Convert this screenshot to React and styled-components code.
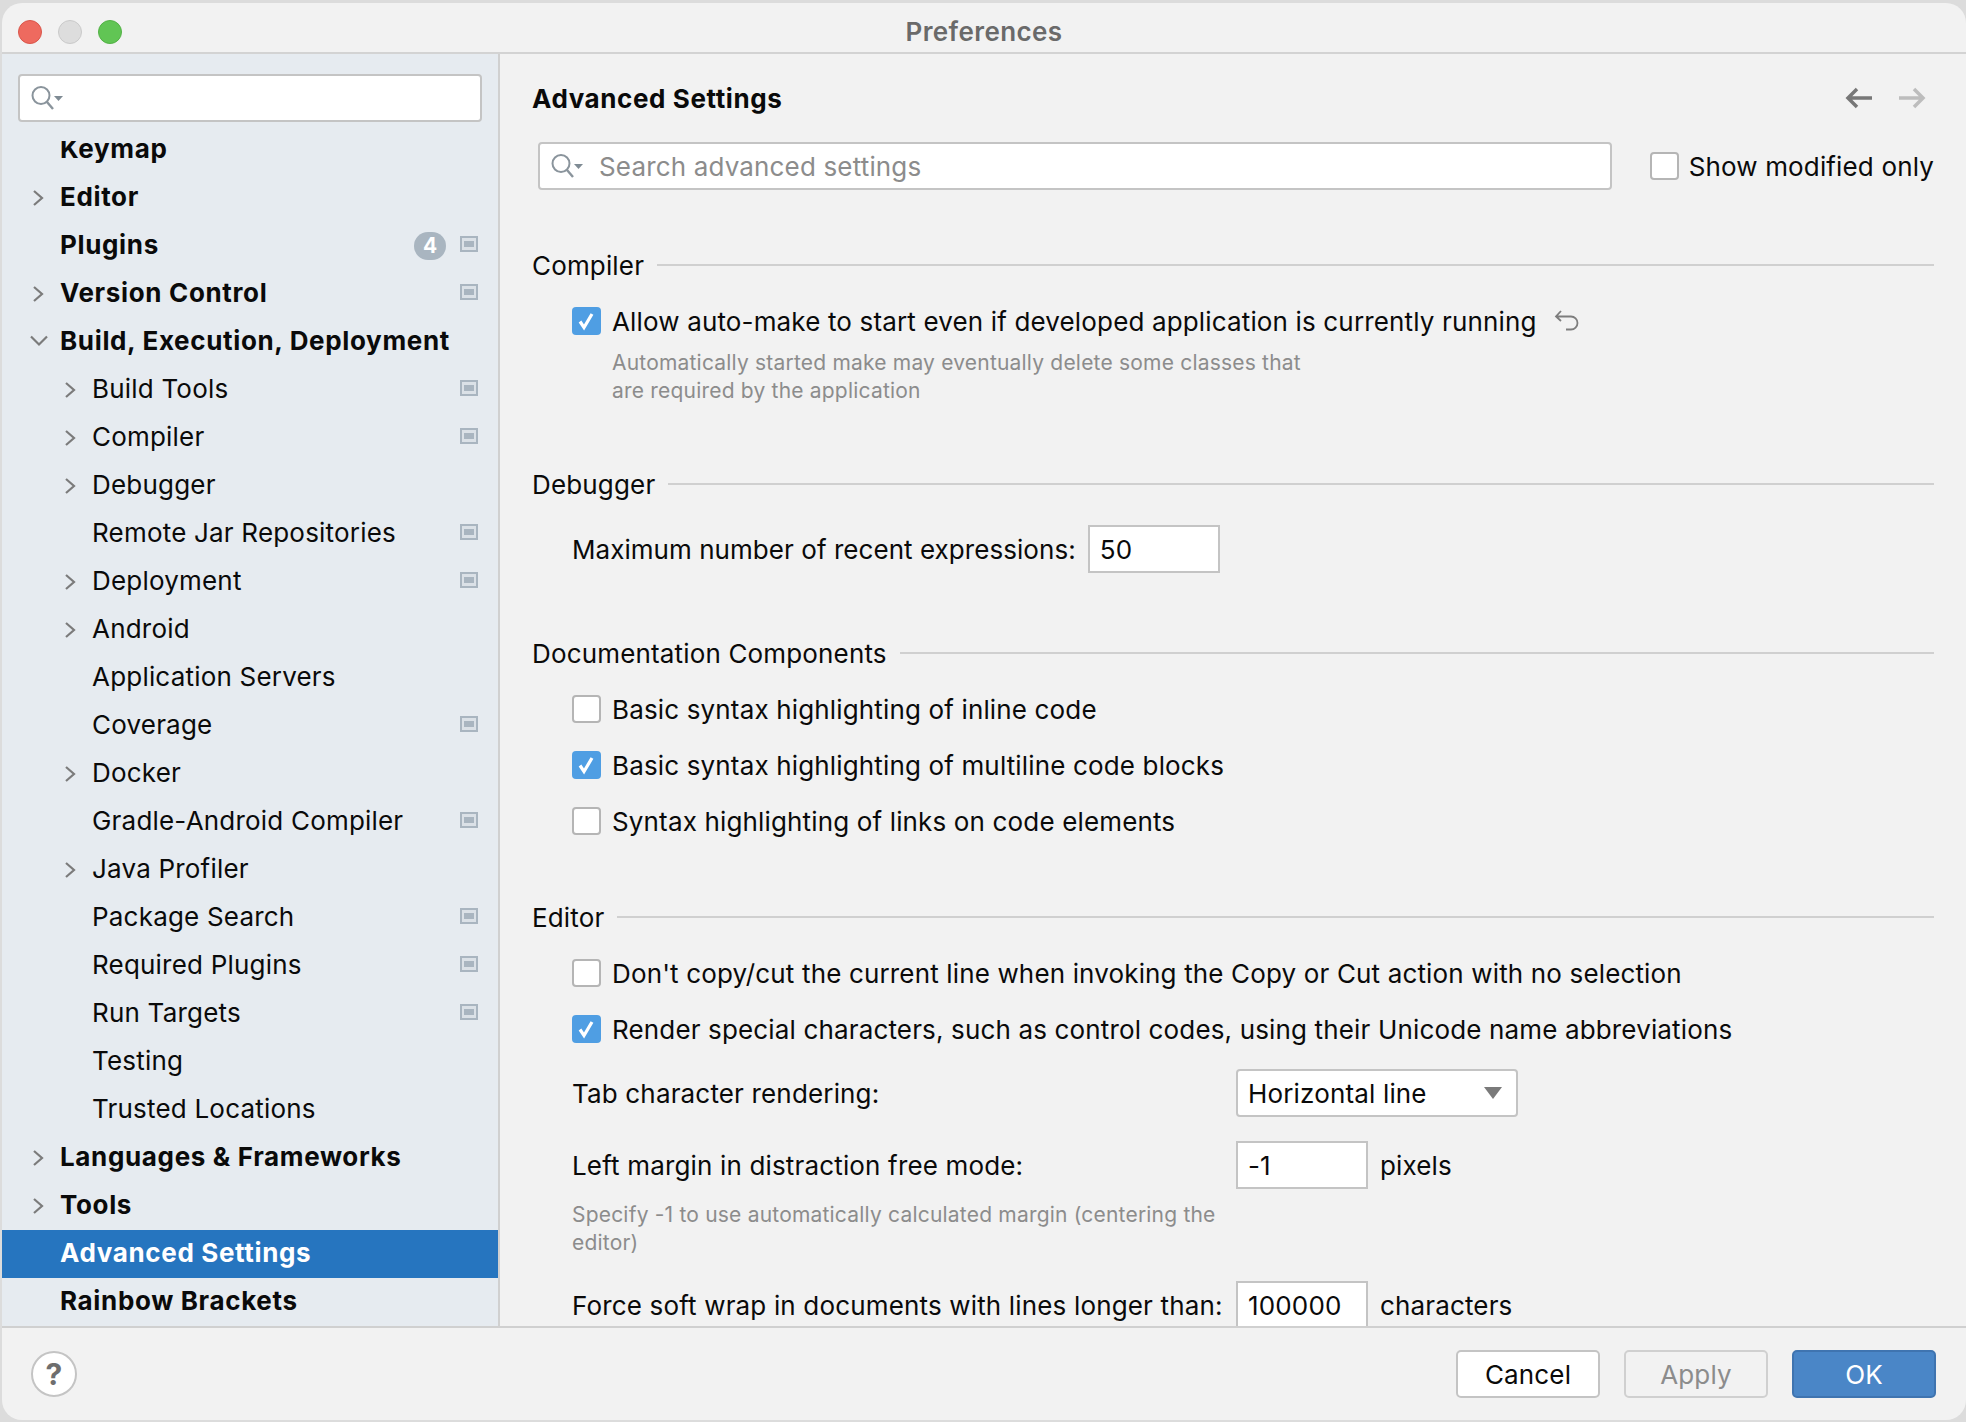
import React from 'react'
import styled, { createGlobalStyle } from 'styled-components'

const GlobalStyle = createGlobalStyle`
    html, body { margin: 0; padding: 0; background: #dcdcdc; }
    body { font-family: Inter, "Liberation Sans", sans-serif; color: #0a0a0a; overflow: hidden; }
`

const TREE = [
    { label: 'Keymap', bold: true },
    { label: 'Editor', bold: true, arrow: 'right' },
    { label: 'Plugins', bold: true, badge: 4, project: true },
    { label: 'Version Control', bold: true, arrow: 'right', project: true },
    { label: 'Build, Execution, Deployment', bold: true, arrow: 'down' },
    { label: 'Build Tools', level: 1, arrow: 'right', project: true },
    { label: 'Compiler', level: 1, arrow: 'right', project: true },
    { label: 'Debugger', level: 1, arrow: 'right' },
    { label: 'Remote Jar Repositories', level: 1, project: true },
    { label: 'Deployment', level: 1, arrow: 'right', project: true },
    { label: 'Android', level: 1, arrow: 'right' },
    { label: 'Application Servers', level: 1 },
    { label: 'Coverage', level: 1, project: true },
    { label: 'Docker', level: 1, arrow: 'right' },
    { label: 'Gradle-Android Compiler', level: 1, project: true },
    { label: 'Java Profiler', level: 1, arrow: 'right' },
    { label: 'Package Search', level: 1, project: true },
    { label: 'Required Plugins', level: 1, project: true },
    { label: 'Run Targets', level: 1, project: true },
    { label: 'Testing', level: 1 },
    { label: 'Trusted Locations', level: 1 },
    { label: 'Languages & Frameworks', bold: true, arrow: 'right' },
    { label: 'Tools', bold: true, arrow: 'right' },
    { label: 'Advanced Settings', bold: true, selected: true },
    { label: 'Rainbow Brackets', bold: true },
]

const SearchIcon = () => (
    <svg width="34" height="26" viewBox="0 0 34 26" fill="none">
        <circle cx="11" cy="10.5" r="8.5" stroke="#8a949c" strokeWidth="2" />
        <path d="M17 17l6 7" stroke="#8a949c" strokeWidth="2.4" />
        <path d="M24 11h9l-4.5 5z" fill="#7f8b94" />
    </svg>
)

const Chevron = ({ dir }) => (
    <svg width="26" height="22" viewBox="0 0 26 22" fill="none">
        {dir === 'right'
            ? <path d="M8 4l8 7-8 7" stroke="#7b7b7b" strokeWidth="2.2" />
            : <path d="M5 5.5l8 8 8-8" stroke="#7b7b7b" strokeWidth="2.2" />}
    </svg>
)

const ProjectIcon = () => (
    <svg width="18" height="16" viewBox="0 0 18 16">
        <rect width="18" height="16" fill="#a9b5c0" />
        <rect x="2" y="2" width="14" height="12" fill="#dbe1e7" />
        <rect x="4" y="5" width="10" height="6" fill="#a9b5c0" />
    </svg>
)

const Check = () => (
    <svg width="29" height="28" viewBox="0 0 29 28" fill="none">
        <path d="M8 14.5l4 6 8-13.5" stroke="#fff" strokeWidth="3.2" />
    </svg>
)

const Checkbox = ({ checked }) => (
    <Box $checked={checked}>{checked && <Check />}</Box>
)

const Row = ({ label, level = 0, bold, arrow, badge, project, selected }) => (
    <TreeRow $level={level} $selected={selected}>
        <ArrowSlot>{arrow && <Chevron dir={arrow} />}</ArrowSlot>
        <RowLabel $bold={bold}>{label}</RowLabel>
        {badge && <Badge>{badge}</Badge>}
        {project && <ProjectSlot><ProjectIcon /></ProjectSlot>}
    </TreeRow>
)

export default function App() {
    return (
        <Window>
            <GlobalStyle />
            <TitleBar>
                <Lights>
                    <Light $color="#ee6a5f" $edge="#d9564b" />
                    <Light $color="#dddddd" $edge="#c9c9c9" />
                    <Light $color="#61c554" $edge="#53b146" />
                </Lights>
                <Title>Preferences</Title>
            </TitleBar>
            <Body>
                <Sidebar>
                    <SideSearch><SearchIcon /></SideSearch>
                    <TreeClip>
                        <Tree>
                            {TREE.map((item) => <Row key={item.label} {...item} />)}
                        </Tree>
                    </TreeClip>
                </Sidebar>
                <Main>
                    <Header>
                        <PageTitle>Advanced Settings</PageTitle>
                        <NavIcons>
                            <svg width="28" height="22" viewBox="0 0 28 22" fill="none">
                                <path d="M27 11H4M12 2l-9 9 9 9" stroke="#777" strokeWidth="3.5" />
                            </svg>
                            <svg width="28" height="22" viewBox="0 0 28 22" fill="none">
                                <path d="M1 11h23M16 2l9 9-9 9" stroke="#bdbdbd" strokeWidth="3.5" />
                            </svg>
                        </NavIcons>
                    </Header>
                    <SearchRow>
                        <MainSearch>
                            <SearchIcon />
                            <Placeholder>Search advanced settings</Placeholder>
                        </MainSearch>
                        <ModifiedOnly>
                            <Checkbox />
                            <Text>Show modified only</Text>
                        </ModifiedOnly>
                    </SearchRow>

                    <Section $top={60}>
                        <Heading><span>Compiler</span><Rule /></Heading>
                        <Rows>
                            <CheckRow>
                                <Checkbox checked />
                                <Text>Allow auto-make to start even if developed application is currently running</Text>
                                <ResetIcon width="26" height="24" viewBox="0 0 26 24" fill="none">
                                    <path d="M7 2L2 7.5 7 12M2 7.5h15a6.5 6.5 0 0 1 0 13h-5" stroke="#7d7d7d" strokeWidth="1.8" />
                                </ResetIcon>
                            </CheckRow>
                        </Rows>
                        <Hint $indent>
                            Automatically started make may eventually delete some classes that<br />
                            are required by the application
                        </Hint>
                    </Section>

                    <Section $top={64}>
                        <Heading $below={26}><span>Debugger</span><Rule /></Heading>
                        <DebuggerRow>
                            <Text>Maximum number of recent expressions:</Text>
                            <NumberBox>50</NumberBox>
                        </DebuggerRow>
                    </Section>

                    <Section $top={65}>
                        <Heading><span>Documentation Components</span><Rule /></Heading>
                        <Rows>
                            <CheckRow><Checkbox /><Text>Basic syntax highlighting of inline code</Text></CheckRow>
                            <CheckRow><Checkbox checked /><Text>Basic syntax highlighting of multiline code blocks</Text></CheckRow>
                            <CheckRow><Checkbox /><Text>Syntax highlighting of links on code elements</Text></CheckRow>
                        </Rows>
                    </Section>

                    <Section $top={63}>
                        <Heading><span>Editor</span><Rule /></Heading>
                        <Rows>
                            <CheckRow><Checkbox /><Text>Don't copy/cut the current line when invoking the Copy or Cut action with no selection</Text></CheckRow>
                            <CheckRow><Checkbox checked /><Text>Render special characters, such as control codes, using their Unicode name abbreviations</Text></CheckRow>
                        </Rows>
                        <Fields>
                            <FieldRow>
                                <FieldLabel>Tab character rendering:</FieldLabel>
                                <Select>
                                    <span>Horizontal line</span>
                                    <svg width="18" height="12" viewBox="0 0 18 12"><path d="M0 0h18l-9 12z" fill="#7a7a7a" /></svg>
                                </Select>
                            </FieldRow>
                            <FieldGroup>
                                <FieldRow>
                                    <FieldLabel>Left margin in distraction free mode:</FieldLabel>
                                    <NumberBox>-1</NumberBox>
                                    <Text>pixels</Text>
                                </FieldRow>
                                <Hint>
                                    Specify -1 to use automatically calculated margin (centering the<br />
                                    editor)
                                </Hint>
                            </FieldGroup>
                            <FieldRow>
                                <FieldLabel>Force soft wrap in documents with lines longer than:</FieldLabel>
                                <NumberBox>100000</NumberBox>
                                <Text>characters</Text>
                            </FieldRow>
                        </Fields>
                    </Section>
                </Main>
            </Body>
            <Footer>
                <Help>?</Help>
                <Buttons>
                    <Button>Cancel</Button>
                    <Button $disabled>Apply</Button>
                    <Button $primary>OK</Button>
                </Buttons>
            </Footer>
        </Window>
    )
}

const Window = styled.div`
    width: 1964px;
    height: 1417px;
    margin: 3px 0 0 2px;
    display: flex;
    flex-direction: column;
    background: #f2f2f2;
    border-radius: 20px;
    overflow: hidden;
`
const TitleBar = styled.div`
    flex: 0 0 51px;
    box-sizing: border-box;
    padding-top: 7px;
    display: flex;
    align-items: center;
    justify-content: center;
    position: relative;
    border-bottom: 2px solid #d3d3d3;
`
const Lights = styled.div`
    position: absolute;
    left: 16px;
    top: 17px;
    display: flex;
    gap: 16px;
`
const Light = styled.div`
    width: 24px;
    height: 24px;
    box-sizing: border-box;
    border-radius: 50%;
    background: ${(p) => p.$color};
    border: 1px solid ${(p) => p.$edge};
`
const Title = styled.div`
    font-size: 26px;
    font-weight: 600;
    color: #6a6a6a;
    letter-spacing: 0.4px;
`
const Body = styled.div`
    flex: 1 1 auto;
    min-height: 0;
    display: flex;
`
const Sidebar = styled.div`
    flex: 0 0 496px;
    display: flex;
    flex-direction: column;
    background: #e6ebf0;
    border-right: 2px solid #d0d0d0;
    min-height: 0;
`
const SideSearch = styled.div`
    height: 48px;
    box-sizing: border-box;
    margin: 20px 16px 0 16px;
    padding: 0 0 0 10px;
    display: flex;
    align-items: center;
    background: #fff;
    border: 2px solid #c4c4c4;
    border-radius: 4px;
`
const TreeClip = styled.div`
    flex: 1 1 auto;
    min-height: 0;
    overflow: hidden;
    margin-top: 19px;
`
const Tree = styled.div`
    margin-top: -15px;
    display: flex;
    flex-direction: column;
`
const TreeRow = styled.div`
    flex: 0 0 48px;
    height: 48px;
    display: flex;
    align-items: center;
    padding-left: ${(p) => 24 + p.$level * 32}px;
    padding-right: 20px;
    background: ${(p) => (p.$selected ? '#2675bf' : 'transparent')};
    color: ${(p) => (p.$selected ? '#fff' : '#0a0a0a')};
`
const ArrowSlot = styled.div`
    width: 34px;
    height: 22px;
    display: flex;
    align-items: center;
`
const RowLabel = styled.div`
    flex: 1 1 auto;
    font-size: 26px;
    font-weight: ${(p) => (p.$bold ? 700 : 400)};
    letter-spacing: ${(p) => (p.$bold ? 0.65 : 0.2)}px;
    white-space: nowrap;
    padding-bottom: 3px;
`
const Badge = styled.div`
    width: 32px;
    height: 28px;
    border-radius: 14px;
    background: #a9b5c0;
    color: #fff;
    font-size: 21px;
    font-weight: 700;
    text-align: center;
    line-height: 28px;
    margin-right: 14px;
`
const ProjectSlot = styled.div`
    display: flex;
    width: 18px;
    margin-bottom: 4px;
`
const Main = styled.div`
    flex: 1 1 auto;
    min-width: 0;
    overflow: hidden;
    padding: 0 32px 0 32px;
`
const Header = styled.div`
    height: 88px;
    box-sizing: border-box;
    display: flex;
    align-items: center;
    justify-content: space-between;
`
const PageTitle = styled.div`
    font-size: 26px;
    font-weight: 700;
    letter-spacing: 0.6px;
    padding-top: 1px;
`
const NavIcons = styled.div`
    display: flex;
    gap: 25px;
    padding-right: 8px;
`
const SearchRow = styled.div`
    height: 48px;
    display: flex;
    align-items: center;
    justify-content: space-between;
`
const MainSearch = styled.div`
    width: 1074px;
    height: 48px;
    margin-left: 6px;
    box-sizing: border-box;
    padding-left: 10px;
    display: flex;
    align-items: center;
    gap: 15px;
    background: #fff;
    border: 2px solid #c4c4c4;
    border-radius: 4px;
`
const Placeholder = styled.span`
    font-size: 26px;
    letter-spacing: 0.16px;
    color: #8c8c8c;
`
const ModifiedOnly = styled.div`
    display: flex;
    align-items: center;
    gap: 10px;
`
const Text = styled.span`
    font-size: 26px;
    letter-spacing: 0.15px;
    white-space: nowrap;
`
const Box = styled.div`
    width: 29px;
    height: 28px;
    box-sizing: border-box;
    flex: 0 0 auto;
    border-radius: 4px;
    background: ${(p) => (p.$checked ? '#4f9ee3' : '#fff')};
    border: ${(p) => (p.$checked ? 'none' : '2px solid #b5b5b5')};
`
const Section = styled.div`
    margin-top: ${(p) => p.$top}px;
`
const Heading = styled.div`
    height: 30px;
    display: flex;
    align-items: center;
    gap: 13px;
    font-size: 26px;
    letter-spacing: 0.16px;
    margin-bottom: ${(p) => p.$below ?? 23}px;
    white-space: nowrap;
`
const Rule = styled.div`
    flex: 1 1 auto;
    height: 2px;
    background: #d0d0d0;
`
const Rows = styled.div`
    display: flex;
    flex-direction: column;
    gap: 20px;
    padding-left: 40px;
`
const CheckRow = styled.div`
    height: 36px;
    display: flex;
    align-items: center;
    gap: 11px;
`
const ResetIcon = styled.svg`
    margin-left: 6px;
`
const Hint = styled.div`
    font-size: 21px;
    line-height: 28px;
    letter-spacing: 0.2px;
    color: #8c8c8c;
    white-space: nowrap;
    padding-left: ${(p) => (p.$indent ? 80 : 40)}px;
    margin-top: ${(p) => (p.$indent ? 10 : 0)}px;
`
const Fields = styled.div`
    display: flex;
    flex-direction: column;
    gap: 24px;
    margin-top: 22px;
`
const FieldGroup = styled.div`
    display: flex;
    flex-direction: column;
    gap: 12px;
`
const FieldRow = styled.div`
    height: 48px;
    display: flex;
    align-items: center;
    gap: 12px;
    padding-left: 40px;
`
const DebuggerRow = styled(FieldRow)`
    ${Text} { letter-spacing: 0.05px; }
`
const FieldLabel = styled.span`
    flex: 0 0 652px;
    font-size: 26px;
    letter-spacing: 0.16px;
    white-space: nowrap;
`
const NumberBox = styled.div`
    width: 132px;
    height: 48px;
    box-sizing: border-box;
    flex: 0 0 auto;
    padding-left: 10px;
    display: flex;
    align-items: center;
    font-size: 26px;
    letter-spacing: 0.16px;
    background: #fff;
    border: 2px solid #c4c4c4;
`
const Select = styled.div`
    width: 282px;
    height: 48px;
    box-sizing: border-box;
    padding: 0 14px 0 10px;
    display: flex;
    align-items: center;
    justify-content: space-between;
    font-size: 26px;
    letter-spacing: 0.16px;
    background: #fff;
    border: 2px solid #c4c4c4;
    border-radius: 4px;
`
const Footer = styled.div`
    flex: 0 0 94px;
    box-sizing: border-box;
    display: flex;
    align-items: center;
    justify-content: space-between;
    padding: 0 30px 0 29px;
    border-top: 2px solid #d0d0d0;
`
const Help = styled.div`
    width: 46px;
    height: 46px;
    box-sizing: border-box;
    border-radius: 50%;
    display: flex;
    align-items: center;
    justify-content: center;
    background: #fff;
    border: 2px solid #c4c4c4;
    color: #6e6e6e;
    font-size: 30px;
    font-weight: 700;
`
const Buttons = styled.div`
    display: flex;
    gap: 24px;
`
const Button = styled.div`
    width: 144px;
    height: 48px;
    box-sizing: border-box;
    display: flex;
    align-items: center;
    justify-content: center;
    border-radius: 5px;
    font-size: 26px;
    letter-spacing: 0.16px;
    background: ${(p) => (p.$primary ? '#4a86c7' : p.$disabled ? '#f2f2f2' : '#fff')};
    border: 2px solid ${(p) => (p.$primary ? '#3f74b0' : p.$disabled ? '#d0d0d0' : '#c4c4c4')};
    color: ${(p) => (p.$primary ? '#fff' : p.$disabled ? '#8c8c8c' : '#0a0a0a')};
`
